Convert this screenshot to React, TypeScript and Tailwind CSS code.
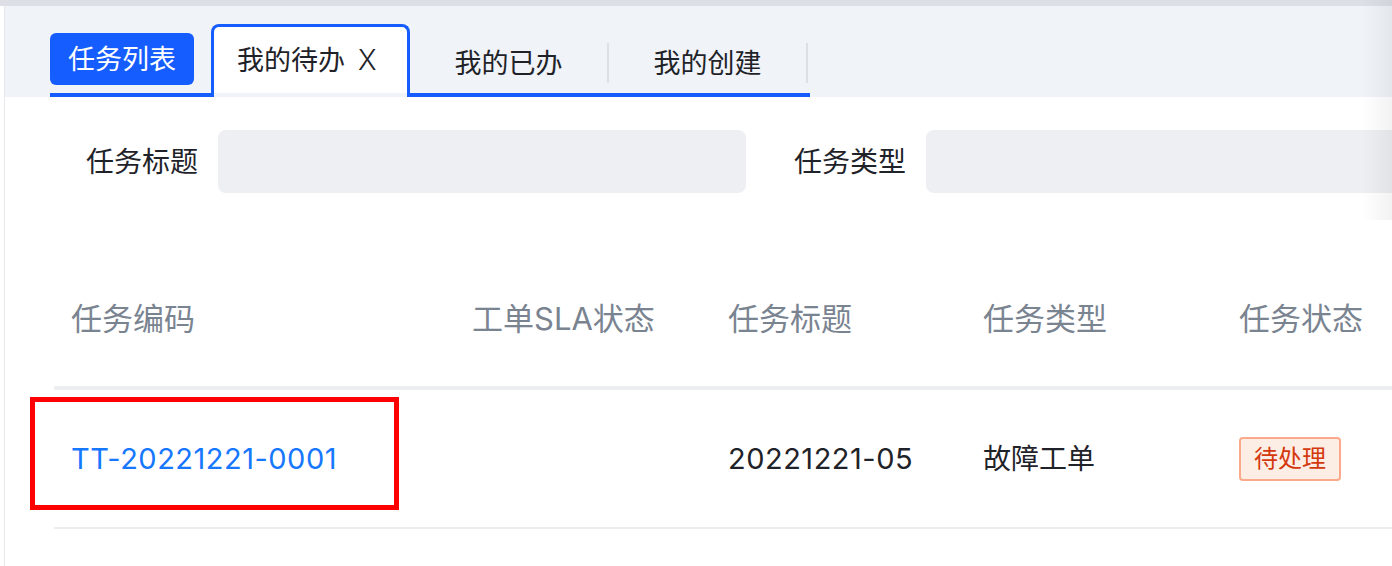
import { useState } from 'react'

const cjk = { fontFamily: 'Inter, "Noto Sans CJK SC", sans-serif' }

const columns = [
  { key: 'code', title: '任务编码', width: 'w-[401px]' },
  { key: 'sla', title: '工单SLA状态', width: 'w-[256px]' },
  { key: 'title', title: '任务标题', width: 'w-[255px]' },
  { key: 'type', title: '任务类型', width: 'w-[256px]' },
  { key: 'status', title: '任务状态', width: 'w-[200px]' },
]

const rows = [
  { code: 'TT-20221221-0001', sla: '', title: '20221221-05', type: '故障工单', status: '待处理' },
]

const App = () => {
  const [tab, setTab] = useState('todo')

  return (
    <div className="relative min-h-[566px] w-[1392px] overflow-hidden bg-white text-[#1f2329]" style={cjk}>
      <div className="h-[6px] bg-[#dcdfe5]" />
      <div className="ml-[4px] min-h-[560px] border-l border-[#e6e8eb]">
        {/* tabs */}
        <div className="h-[91px] bg-[#f0f3f8] pl-[45px] pt-[18px]">
          <div className="flex h-[73px] w-[760px] items-end border-b-[4px] border-[#165dff]">
            <button className="mb-[8px] mr-[17px] h-[52px] w-[144px] rounded-[6px] bg-[#165dff] text-[27px] leading-none text-white">
              任务列表
            </button>
            <div
              onClick={() => setTab('todo')}
              className="relative z-10 -mb-[4px] flex h-[73px] w-[199px] flex-col rounded-t-[8px] border-x-[3px] border-t-[3px] border-[#165dff] bg-white"
            >
              <div className="flex flex-1 items-center pl-[23px] text-[27px] leading-none">
                我的待办 <span className="ml-[13px] text-[28px] font-light">X</span>
              </div>
              <div className="h-[4px] bg-[#f0f3f8]" />
            </div>
            {['我的已办', '我的创建'].map((t) => (
              <div key={t} className="mb-[10px] flex h-[40px] w-[199px] items-center justify-center border-r-2 border-[#dcdfe5] text-[27px] leading-none">
                {t}
              </div>
            ))}
          </div>
        </div>

        {/* form */}
        <div className="flex items-center pt-[33px]">
          <label className="w-[213px] shrink-0 whitespace-nowrap pr-[20px] text-right text-[28px]">任务标题</label>
          <div className="h-[63px] w-[528px] shrink-0 rounded-[8px] bg-[#eeeff3]" />
          <label className="ml-[48px] w-[132px] shrink-0 whitespace-nowrap text-[28px]">任务类型</label>
          <div className="h-[63px] flex-1 rounded-l-[8px] bg-[#eeeff3]" />
        </div>

        {/* table */}
        <div className="ml-[49px] mt-[59px]">
          <div className="flex h-[138px] items-center border-b-[4px] border-[#eceef2] text-[31px] text-[#7a8491]">
            {columns.map((c) => (
              <div key={c.key} className={`${c.width} shrink-0 pl-[17px] whitespace-nowrap`}>
                {c.title}
              </div>
            ))}
          </div>
          {rows.map((r) => (
            <div key={r.code} className="relative flex h-[139px] items-center border-b-2 border-[#ebedf0] text-[28px]">
              <div className="w-[401px] shrink-0 pl-[17px] text-[29px] tracking-[0.5px] text-[#1677ff]">{r.code}</div>
              <div className="w-[256px] shrink-0 pl-[17px]">{r.sla}</div>
              <div className="w-[255px] shrink-0 pl-[17px] text-[29px] tracking-[0.5px]">{r.title}</div>
              <div className="w-[256px] shrink-0 pl-[17px]">{r.type}</div>
              <div className="w-[200px] shrink-0 pl-[17px]">
                <span className="inline-flex h-[44px] items-center rounded-[4px] border-2 border-[#fba98a] bg-[#fdeee5] px-[13px] text-[24px] text-[#d4380d]">
                  {r.status}
                </span>
              </div>
              {/* red highlight annotation */}
              <div className="absolute left-[-24px] top-[7px] h-[113px] w-[369px] border-[5px] border-[#ff0000]" />
            </div>
          ))}
        </div>
      </div>

      {/* scroll shadow on the right edge */}
      <div className="pointer-events-none absolute right-0 top-0 h-[220px] w-[30px] bg-gradient-to-r from-transparent to-[rgba(0,0,0,0.05)]" />
    </div>
  )
}

export default App
